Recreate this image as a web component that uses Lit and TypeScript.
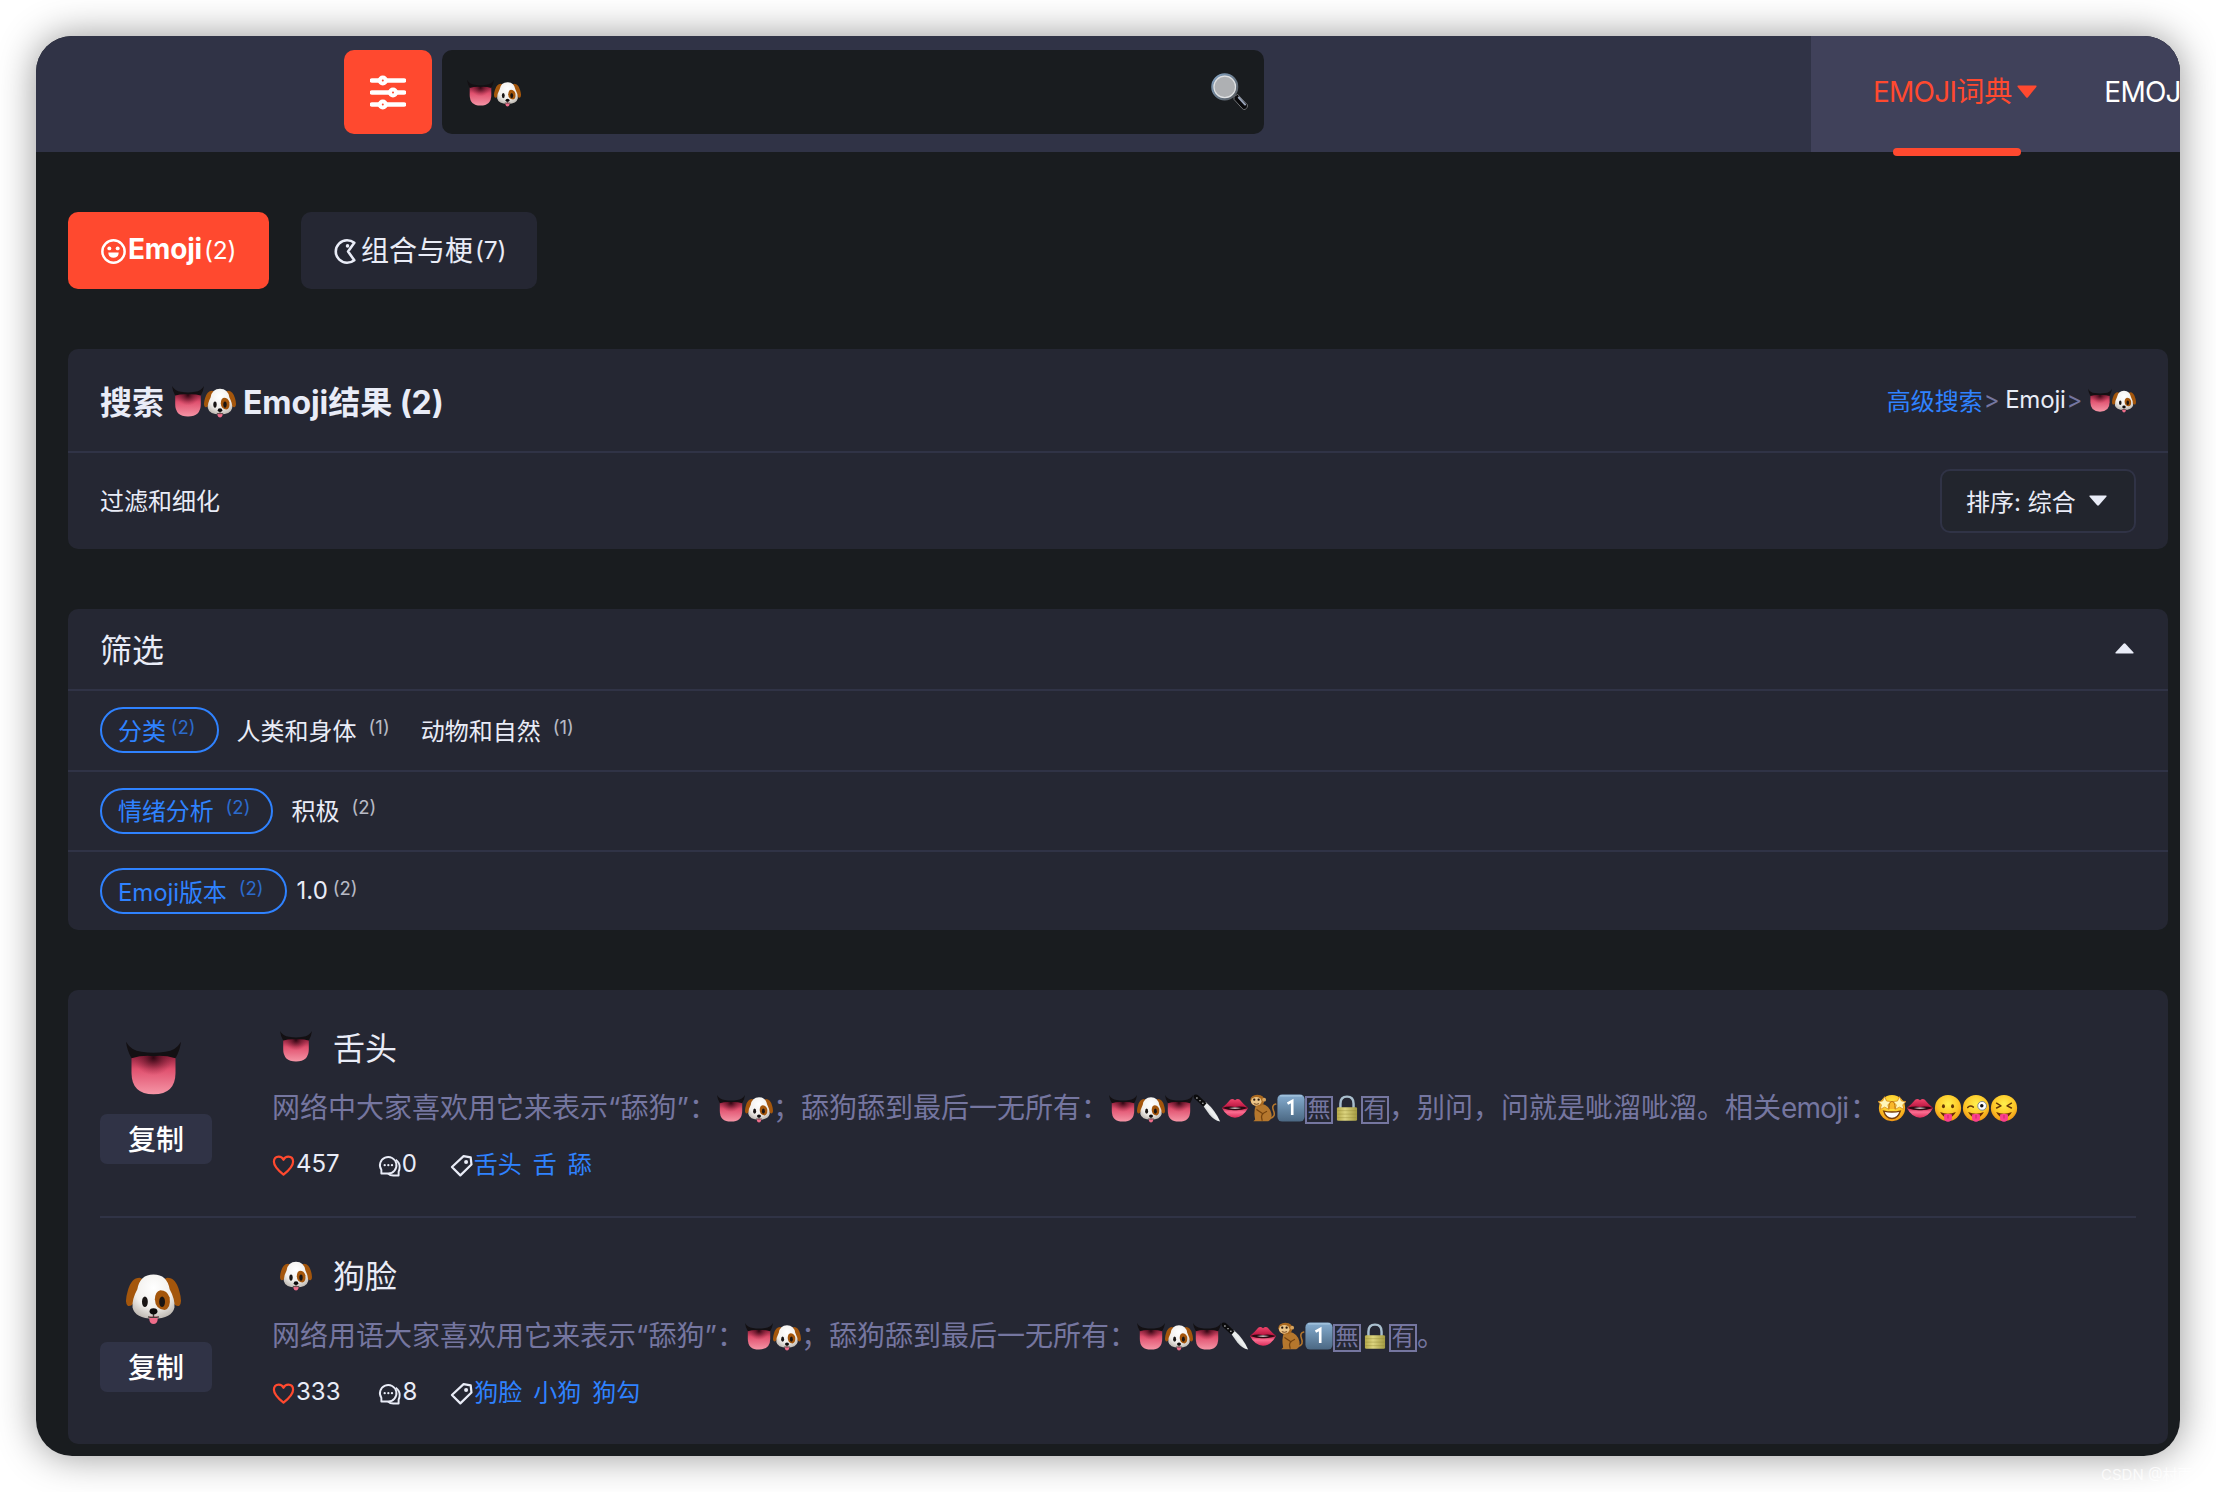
import { LitElement, html, svg, css } from "lit";
import { customElement } from "lit/decorators.js";

type Glyph =
  | "tongue" | "dog" | "knife" | "lips" | "monkey" | "one"
  | "lock" | "starry" | "playful" | "wink" | "squint" | "magnifier";

const face = svg`<circle cx="16" cy="16" r="15" fill="url(#gFace)" />`;
const grinTongue = svg`
  <path d="M7 20.5Q16 24.5 25 20.5Q22 27 16 27T7 20.5Z" fill="#6b2a06" />
  <path d="M11.5 23.5Q16 21.8 20.5 23.5V28Q20 31.6 16 31.6T11.5 28Z" fill="#fb3f8c" />
  <path d="M16 24V28" stroke="#c81d63" stroke-width="1" />`;

const GLYPHS: Record<Glyph, unknown> = {
  tongue: svg`
    <path d="M3.2 9H28.8V19Q28.8 31.5 16 31.5T3.2 19Z" fill="url(#gTongue)" />
    <path d="M3.2 9H28.8V19Q28.8 31.5 16 31.5T3.2 19Z" fill="url(#gTongueShade)" />
    <path d="M0 1Q3 6.2 9 6.8Q16 8 23 6.8Q29 6.2 32 1Q31.4 6 28.8 10.6Q22 8.6 16 9.4Q10 8.6 3.2 10.6Q.6 6 0 1Z" fill="#131013" />`,
  dog: svg`<g transform="translate(0 1.800) scale(1 .963)">
    <path d="M8 4Q3 4 1 12Q-1 19 1 21Q4 22 6 16L10 5Z" fill="#a4560c" />
    <path d="M24 4Q29 4 31 12Q33 19 31 21Q28 22 26 16L22 5Z" fill="#a4560c" />
    <path d="M16 2Q24 2 25.400 11Q28.600 17 28.200 22Q26.800 28.600 16 28.800Q5.200 28.600 3.800 22Q3.400 17 6.600 11Q8 2 16 2Z" fill="url(#gFur)" />
    <path d="M20 11.500Q24 11.500 25.400 16Q26.200 22.500 22.500 23.500Q17 23 16.800 17Q17 12 20 11.500Z" fill="#a4560c" />
    <ellipse cx="11" cy="18.500" rx="1.700" ry="3.200" fill="#191514" />
    <ellipse cx="21" cy="18.500" rx="1.700" ry="3.200" fill="#191514" />
    <path d="M13.600 27.500H18.400V29.500Q18 31.900 16 31.900T13.600 29.500Z" fill="#ee6d8a" />
    <path d="M16 25V27.600M12.800 27.600Q16 28.400 19.200 27.600" stroke="#443a36" stroke-width=".8" fill="none" />
    <ellipse cx="16" cy="24.300" rx="2.300" ry="1.900" fill="#0c0a0a" /></g>`,
  knife: svg`
    <path d="M11 12.500L14.500 9Q26 19 31 31.500Q24 30 18.500 23Z" fill="url(#gSteel)" />
    <path d="M1 1Q4-.5 6.500 2L15.500 10.500L12 14.500L1.500 5Q0 3 1 1Z" fill="#0b0b0c" />
    <circle cx="4.500" cy="4.500" r=".9" fill="#ddd" /><circle cx="8" cy="7.600" r=".8" fill="#ddd" /><circle cx="11.300" cy="10.600" r=".8" fill="#ddd" />`,
  lips: svg`
    <path d="M1 16Q6 12 10.500 6.500Q13 4.500 16 7Q19 4.500 21.500 6.500Q26 12 31 16Q25 27 16 27T1 16Z" fill="url(#gLips)" />
    <path d="M1 16Q9 13.500 16 14.800Q23 13.500 31 16Q22 19 16 18.600Q10 19 1 16Z" fill="#2a0a12" />
    <path d="M9 16Q16 14.800 23 16Q16 17.600 9 16Z" fill="#f5eeee" />`,
  monkey: svg`
    <path d="M24 28Q31 26 28 19Q25.500 12.500 30.500 11.500" fill="none" stroke="#b5772d" stroke-width="1.800" stroke-linecap="round" />
    <path d="M8 12Q5 20 7 29L5 31H22Q27 29 25.500 22Q23.500 13 14.500 11Z" fill="#b5772d" />
    <path d="M15 30Q12 23 20 20M9 18L15 22" stroke="#75430f" stroke-width="1.500" fill="none" stroke-linecap="round" />
    <path d="M1.500 7Q2 1 9.500 .8Q18 1 17.500 8Q17 14 10 14Q3 14 1.500 7Z" fill="#a9681f" />
    <circle cx="17.300" cy="6.500" r="2.200" fill="#d8a35c" />
    <ellipse cx="8.300" cy="8.300" rx="6" ry="5" fill="#ebc488" />
    <circle cx="6" cy="6.500" r="1.300" fill="#24160c" /><circle cx="11" cy="6.500" r="1.300" fill="#24160c" />
    <path d="M5.500 11Q8.500 12.500 11.500 11" stroke="#613310" fill="none" />`,
  one: svg`
    <rect x=".5" y=".5" width="31" height="31" rx="5.500" fill="url(#gKey)" />
    <path d="M4 2.200H28" stroke="#b6d3e8" stroke-width="1.400" stroke-linecap="round" opacity=".7" />
    <path d="M12 11L17.400 8V24" fill="none" stroke="#fff" stroke-width="3" />`,
  lock: svg`
    <path d="M8.500 17V11Q8.500 3 16 3T23.500 11V17" fill="none" stroke="#a9bfce" stroke-width="2.800" />
    <rect x="4.500" y="15" width="23" height="15.500" rx="1.500" fill="url(#gBrass)" />
    <path d="M5 19H27M5 23H27M5 27H27" stroke="#8f8535" stroke-width=".7" opacity=".6" />`,
  starry: svg`${face}
    <path d="M7.500 3L9.800 8L15.300 8.600L11.300 12.300L12.600 17.600L7.600 15L2.600 17.600L3.900 12.300L0 8.600L5.300 8Z" fill="#fff6b8" stroke="#d88a14" stroke-width=".9" />
    <path d="M24.500 3L26.800 8L32 8.600L28.300 12.300L29.600 17.600L24.600 15L19.600 17.600L20.900 12.300L16.800 8.600L22.300 8Z" fill="#fff6b8" stroke="#d88a14" stroke-width=".9" />
    <path d="M12.500 17Q12.500 8.500 16 8.500T19.500 17" fill="#f9b82a" stroke="#b36a10" stroke-width="1" />
    <path d="M6.500 19.500Q16 21.500 25.500 19.500Q23 28 16 28T6.500 19.500Z" fill="#fff" stroke="#7a3f0c" stroke-width="1.600" />`,
  playful: svg`${face}<ellipse cx="10.800" cy="14" rx="1.700" ry="2.300" fill="#643406" /><ellipse cx="21.200" cy="14" rx="1.700" ry="2.300" fill="#643406" />${grinTongue}`,
  wink: svg`${face}<path d="M6.500 15.500Q9.500 12 13 15" fill="none" stroke="#643406" stroke-width="1.700" stroke-linecap="round" />
    <circle cx="23" cy="13.500" r="5" fill="#fff" stroke="#6f7f8a" stroke-width="1" /><circle cx="22.600" cy="13.500" r="2" fill="#111" />${grinTongue}`,
  squint: svg`${face}<path d="M7.500 10.500L12.500 13.500L7.500 16M24.500 10.500L19.500 13.500L24.500 16" fill="none" stroke="#643406" stroke-width="1.700" stroke-linecap="round" stroke-linejoin="round" />${grinTongue}`,
  magnifier: svg`
    <path d="M19.800 20.500L23 18.500L31.500 27.500Q32.300 30 29.500 31.500Q28 31.900 27 30.700L20 23Z" fill="#08080a" stroke="#77797d" stroke-width=".8" />
    <path d="M24 21.200L29.500 27.300" stroke="#98a3b8" stroke-width="1.700" stroke-linecap="round" />
    <circle cx="11.900" cy="12" r="10.700" fill="#aeb0b3" stroke="url(#gRim)" stroke-width="2" />
    <circle cx="11.900" cy="12" r="9.300" fill="none" stroke="#dfe1e3" stroke-width="1" />`,
};

const NAMES: Record<Glyph, string> = {
  tongue: "👅", dog: "🐶", knife: "🔪", lips: "👄", monkey: "🐒", one: "1️⃣",
  lock: "🔒", starry: "🤩", playful: "😛", wink: "😜", squint: "😝", magnifier: "🔍",
};

const emoji = (g: Glyph) =>
  html`<svg class="emoji" viewBox="0 0 32 32" role="img" aria-label=${NAMES[g]}>${GLYPHS[g]}</svg>`;
const pair = () => html`${emoji("tongue")}${emoji("dog")}`;
const squared = (c: string) => html`<span class="squared"><span>${c}</span></span>`;
const chain = () => html`${pair()}${emoji("tongue")}${emoji("knife")}${emoji("lips")}${emoji("monkey")}${emoji("one")}${squared("無")}${emoji("lock")}${squared("有")}`;

const gradients = html`<svg class="defs" width="0" height="0" aria-hidden="true"><defs>
  <linearGradient id="gTongue" x1="0" y1="0" x2="0" y2="1"><stop offset="0" stop-color="#8c1f3a" /><stop offset=".35" stop-color="#e0506e" /><stop offset="1" stop-color="#f595a6" /></linearGradient>
  <radialGradient id="gTongueShade" cx=".5" cy=".06" r=".45"><stop offset="0" stop-color="#2b0510" stop-opacity=".95" /><stop offset="1" stop-color="#8c1f3a" stop-opacity="0" /></radialGradient>
  <radialGradient id="gFur" cx=".5" cy=".3" r=".75"><stop offset="0" stop-color="#fff" /><stop offset=".6" stop-color="#f1efec" /><stop offset="1" stop-color="#b9b3ac" /></radialGradient>
  <linearGradient id="gSteel" x1="0" y1="1" x2="1" y2="0"><stop offset="0" stop-color="#80868a" /><stop offset=".5" stop-color="#f1f3f3" /><stop offset="1" stop-color="#a3a8ab" /></linearGradient>
  <linearGradient id="gLips" x1="0" y1="0" x2="0" y2="1"><stop offset="0" stop-color="#f2456c" /><stop offset=".45" stop-color="#b81540" /><stop offset=".7" stop-color="#fb6f92" /><stop offset="1" stop-color="#dc2f5c" /></linearGradient>
  <linearGradient id="gKey" x1="0" y1="0" x2="0" y2="1"><stop offset="0" stop-color="#86add0" /><stop offset="1" stop-color="#4b6883" /></linearGradient>
  <linearGradient id="gBrass" x1="0" y1="0" x2="1" y2="0"><stop offset="0" stop-color="#b5a94a" /><stop offset=".4" stop-color="#dcd47f" /><stop offset="1" stop-color="#a39a42" /></linearGradient>
  <radialGradient id="gFace" cx=".5" cy=".35" r=".7"><stop offset="0" stop-color="#fff04d" /><stop offset=".6" stop-color="#fdc526" /><stop offset="1" stop-color="#ec8a12" /></radialGradient>
  <linearGradient id="gRim" x1="0" y1="0" x2="1" y2="1"><stop offset="0" stop-color="#86a5c4" /><stop offset="1" stop-color="#55585c" /></linearGradient>
</defs></svg>`;

const slidersIcon = svg`<svg class="sliders" viewBox="0 0 36 36">
  <path d="M2 6.500H34M2 18.500H34M2 30.500H34" stroke="#fff" stroke-width="4.400" stroke-linecap="round" />
  <g fill="#ff492f" stroke="#fff" stroke-width="4"><circle cx="12.800" cy="6.500" r="3" /><circle cx="23" cy="18.500" r="3" /><circle cx="12.800" cy="30.500" r="3" /></g></svg>`;
const smileIcon = svg`<svg class="tab-icon" viewBox="0 0 24 24"><circle cx="12" cy="12" r="10.700" fill="none" stroke="currentColor" stroke-width="2.400" />
  <circle cx="8" cy="9" r="1.900" fill="currentColor" /><circle cx="16" cy="9" r="1.900" fill="currentColor" /><path d="M7 13H17Q16.800 18 12 18T7 13Z" fill="currentColor" /></svg>`;
const pacIcon = svg`<svg class="tab-icon" viewBox="0 0 24 24"><path d="M19.500 3.600Q16.500 1.200 12.500 1.200A10.800 10.800 0 0 0 12.500 22.800Q16.500 22.800 19.500 20.400L13.500 12Z" fill="none" stroke="currentColor" stroke-width="2.500" stroke-linejoin="round" /><circle cx="13" cy="6.600" r="1.700" fill="currentColor" /></svg>`;
const heartIcon = svg`<svg class="meta-icon heart" viewBox="0 0 24 24"><path d="M12 21.500Q2 13.500 2 8Q2 2.800 7 2.800Q10.400 2.800 12 6Q13.600 2.800 17 2.800Q22 2.800 22 8Q22 13.500 12 21.500Z" fill="none" stroke="currentColor" stroke-width="2.300" stroke-linejoin="round" /></svg>`;
const chatIcon = svg`<svg class="meta-icon" viewBox="0 0 24 24"><g fill="none" stroke="currentColor" stroke-width="2" stroke-linejoin="round"><path d="M3.500 20.300V16.500A8.600 8.600 0 1 1 10.500 20.300Z" /><path d="M18.500 6Q22.600 9 22.600 13.500Q22.600 16.500 21.500 18.500V22.500H16Q12.500 22.500 10.500 20.500" /></g>
  <g fill="currentColor"><circle cx="7" cy="11.700" r="1.200" /><circle cx="10.800" cy="11.700" r="1.200" /><circle cx="14.600" cy="11.700" r="1.200" /></g></svg>`;
const tagIcon = svg`<svg class="meta-icon" viewBox="0 0 24 24"><path d="M14.200 2.200L21.600 3.500L22.400 11L10.800 22.300L2 13.500Z" fill="none" stroke="currentColor" stroke-width="2.300" stroke-linejoin="round" /><circle cx="16.800" cy="8.300" r="2.100" fill="currentColor" /></svg>`;
const caret = (cls: string) => html`<svg class="caret ${cls}" viewBox="0 0 20 12" preserveAspectRatio="none"><path d="M1 .5H19Q20 .8 19.300 1.800L11 11.300Q10 12.300 9 11.300L.7 1.800Q0 .8 1 .5Z" fill="currentColor" /></svg>`;

interface Facet { label: string; count: number; tight?: boolean; options: { label: string; count: number; tight?: boolean }[] }
const FACETS: Facet[] = [
  { label: "分类", count: 2, tight: true, options: [{ label: "人类和身体", count: 1 }, { label: "动物和自然", count: 1 }] },
  { label: "情绪分析", count: 2, options: [{ label: "积极", count: 2 }] },
  { label: "Emoji版本", count: 2, options: [{ label: "1.0", count: 2, tight: true }] },
];

interface Entry { glyph: Glyph; title: string; text: () => unknown; likes: number; comments: number; tags: string[] }
const ENTRIES: Entry[] = [
  {
    glyph: "tongue", title: "舌头", likes: 457, comments: 0, tags: ["舌头", "舌", "舔"],
    text: () => html`网络中大家喜欢用它来表示<span class="latin">“</span>舔狗<span class="latin">”</span>：${pair()}；舔狗舔到最后一无所有：${chain()}，别问，问就是呲溜呲溜。相关<span class="word">emoji</span>：${emoji("starry")}${emoji("lips")}${emoji("playful")}${emoji("wink")}${emoji("squint")}`,
  },
  {
    glyph: "dog", title: "狗脸", likes: 333, comments: 8, tags: ["狗脸", "小狗", "狗勾"],
    text: () => html`网络用语大家喜欢用它来表示<span class="latin">“</span>舔狗<span class="latin">”</span>：${pair()}；舔狗舔到最后一无所有：${chain()}。`,
  },
];

@customElement("app-root")
export class AppRoot extends LitElement {
  static styles = css`
    :host { display: block; font-family: Inter, "Noto Sans CJK SC", sans-serif; color: #e9ecf7; font-size: 24px; }
    * { box-sizing: border-box; }
    .page { position: relative; width: 2216px; height: 1492px; padding: 36px; background: #fff; overflow: hidden; }
    .window { height: 1420px; border-radius: 36px; overflow: hidden; background: #191c1f; }
    .shadow { border-radius: 36px; box-shadow: 0 0 38px rgba(0, 0, 0, .42); }
    .defs { position: absolute; }
    .emoji { width: 1em; height: 1em; flex: none; display: inline-block; vertical-align: -.13em; overflow: visible; }
    .caret { width: 20px; height: 13px; flex: none; }

    .header { display: flex; height: 116px; background: #303346; white-space: nowrap; }
    .search { display: flex; gap: 10px; padding: 14px 0 0 308px; width: 1775px; flex: none; }
    .filter-btn { width: 88px; height: 84px; border-radius: 10px; background: #ff492f; display: flex; align-items: center; justify-content: center; }
    .sliders { width: 36px; height: 36px; }
    .field { width: 822px; height: 84px; border-radius: 10px; background: #191c1f; display: flex; align-items: center; padding: 0 16px 0 25px; font-size: 27px; }
    .glass { margin-left: auto; font-size: 37px; display: flex; padding-bottom: 2px; }
    .nav { flex: none; width: 369px; background: #40415a; display: flex; font-size: 28px; line-height: 110px; letter-spacing: -.75px; color: #fff; padding-left: 62px; gap: 68px; }
    .nav-item { position: relative; display: flex; align-items: center; height: 116px; padding-bottom: 5px; }
    .nav-item .caret { margin-left: 5px; margin-right: -1px; }
    .active { color: #ff492f; }
    .active::after { content: ""; position: absolute; left: 20px; width: 128px; bottom: -4px; height: 8px; border-radius: 4px; background: #ff492f; }
    .cjk { letter-spacing: 0; }

    .main { padding: 60px 12px 0 32px; display: flex; flex-direction: column; gap: 60px; }
    .tabs { display: flex; gap: 32px; }
    .tab { height: 77px; width: 236px; padding: 0 0 3px 33px; border-radius: 10px; background: #252733; display: flex; align-items: center; font-size: 28px; gap: 2px; }
    .tab b { font-weight: 700; letter-spacing: -.2px; }
    .tab .n { font-size: 24.500px; letter-spacing: -.2px; padding-top: 2px; }
    .selected { width: 201px; background: #ff492f; color: #fff; }
    .tab-icon { width: 25px; height: 25px; margin-top: 4px; flex: none; overflow: visible; }

    .card { background: #252733; border-radius: 10px; }
    .line { display: flex; align-items: center; padding: 0 32px; border-bottom: 2px solid #303346; }
    .line:last-child { border-bottom: 0; }
    .title-row { height: 104px; padding-bottom: 1px; }
    .title { margin: 0; font-size: 32px; font-weight: 700; display: flex; align-items: center; letter-spacing: -.1px; }
    .title .cjk { font-weight: 700; }
    .title .pair { display: flex; margin: 2px 7px 0 8px; }
    .crumbs { margin-left: auto; display: flex; align-items: center; }
    .link { color: #2f82ff; }
    .sep { color: #7576a0; margin: 0 7px 0 1px; letter-spacing: -1.500px; }
    .crumbs .latin-name { letter-spacing: -.2px; }
    .crumbs .pair { display: flex; }
    .sort-row { height: 96px; padding-bottom: 1px; }
    .sort-label { padding-bottom: 2px; }
    .sort { margin: 1px 0 0 auto; width: 196px; height: 64px; border: 2px solid #303346; border-radius: 10px; background: #22252d; display: flex; align-items: center; padding: 0 0 2px 24px; }
    .sort .caret { margin: 1px 0 0 13px; width: 18px; height: 11px; }

    .filter-head { height: 82px; font-size: 32px; padding-bottom: 2px; justify-content: space-between; padding-right: 34px; }
    .up { transform: rotate(180deg); width: 19px; height: 11px; }
    .facet { height: 80.500px; white-space: nowrap; }
    .facet:last-child { height: 78px; }
    .pill { height: 46px; border: 2px solid #2f82ff; border-radius: 23px; color: #2f82ff; padding: 0 21px 2px 16px; display: flex; align-items: center; letter-spacing: -.1px; margin-right: 18px; }
    .pill.snug { margin-right: 10px; }
    .count { font-size: 18.500px; margin: -5px 0 0 12px; opacity: .75; letter-spacing: 0; }
    .tight .count { margin-left: 5px; }
    .option { display: flex; align-items: center; margin-right: 31px; padding-bottom: 2px; }

    .results { padding: 0 32px; height: 454px; }
    .entry { display: flex; height: 228px; border-bottom: 2px solid #303346; }
    .entry:last-child { border-bottom: 0; }
    .side { width: 112px; margin-right: 60px; padding-top: 50px; flex: none; }
    .big { font-size: 55px; display: flex; padding-left: 26px; height: 74px; }
    .copy { height: 50px; border-radius: 7px; background: #303346; color: #fff; font-size: 28px; font-weight: 500; display: flex; align-items: center; justify-content: center; padding-bottom: 2px; }
    .body { padding-top: 32px; white-space: nowrap; }
    .name { font-size: 32px; height: 48px; display: flex; align-items: center; gap: 21px; padding-left: 8px; }
    .desc { font-size: 28px; color: #7576a0; height: 42px; line-height: 42px; margin-top: 17px; }
    .latin { display: inline-block; width: 12.500px; letter-spacing: -1px; }
    .word { display: inline-block; width: 69px; letter-spacing: -.8px; }
    .squared { display: inline-flex; width: 28px; height: 28px; border: 2px solid #7576a0; align-items: center; justify-content: center; vertical-align: 1px; overflow: hidden; line-height: 24px; }
    .squared span { font-size: 23px; line-height: 24px; margin-top: -2px; }
    .meta { display: flex; align-items: center; height: 36px; margin-top: 16px; }
    .meta-icon { width: 23px; height: 23px; flex: none; margin: 4px 1px 0 0; }
    .heart { color: #ff492f; }
    .num { margin-right: 38px; }
    .num.short { margin-right: 33px; }
    .tag { color: #2f82ff; margin-right: 11px; padding-bottom: 1px; }
    .mark { position: absolute; left: 2101px; top: 1464px; font-size: 15px; line-height: 22px; color: #fff; opacity: .75; white-space: nowrap; }
  `;

  private facet(f: Facet) {
    const snug = f.options[0].tight;
    return html`<div class="line facet">
      <span class="pill ${f.tight ? "tight" : ""} ${snug ? "snug" : ""}">${f.label}<span class="count">(${f.count})</span></span>
      ${f.options.map((o) => html`<span class="option ${o.tight ? "tight" : ""}">${o.label}<span class="count">(${o.count})</span></span>`)}
    </div>`;
  }

  private entry(e: Entry) {
    return html`<div class="entry">
      <div class="side"><div class="big">${emoji(e.glyph)}</div><div class="copy">复制</div></div>
      <div class="body">
        <div class="name">${emoji(e.glyph)}<span>${e.title}</span></div>
        <div class="desc">${e.text()}</div>
        <div class="meta">
          ${heartIcon}<span class="num">${e.likes}</span>
          ${chatIcon}<span class="num short">${e.comments}</span>
          ${tagIcon}${e.tags.map((t) => html`<span class="tag">${t}</span>`)}
        </div>
      </div>
    </div>`;
  }

  render() {
    return html`<div class="page">${gradients}
      <div class="shadow"><div class="window">
        <div class="header">
          <div class="search">
            <div class="filter-btn">${slidersIcon}</div>
            <div class="field">${pair()}<span class="glass">${emoji("magnifier")}</span></div>
          </div>
          <div class="nav">
            <span class="nav-item active">EMOJI<span class="cjk">词典</span>${caret("")}</span>
            <span class="nav-item">EMOJ</span>
          </div>
        </div>
        <div class="main">
          <div class="tabs">
            <div class="tab selected">${smileIcon}<b>Emoji</b><span class="n">(2)</span></div>
            <div class="tab">${pacIcon}<span>组合与梗</span><span class="n">(7)</span></div>
          </div>
          <div class="card">
            <div class="line title-row">
              <h1 class="title"><span class="cjk">搜索</span><span class="pair">${pair()}</span><span>Emoji<span class="cjk">结果</span> (2)</span></h1>
              <div class="crumbs"><span class="link">高级搜索</span><span class="sep">&gt;</span><span class="latin-name">Emoji</span><span class="sep">&gt;</span><span class="pair">${pair()}</span></div>
            </div>
            <div class="line sort-row"><span class="sort-label">过滤和细化</span><div class="sort">排序: 综合${caret("")}</div></div>
          </div>
          <div class="card">
            <div class="line filter-head"><span>筛选</span>${caret("up")}</div>
            ${FACETS.map((f) => this.facet(f))}
          </div>
          <div class="card results">${ENTRIES.map((e) => this.entry(e))}</div>
        </div>
      </div></div>
      <div class="mark">CSDN @村雨遥</div>
    </div>`;
  }
}
